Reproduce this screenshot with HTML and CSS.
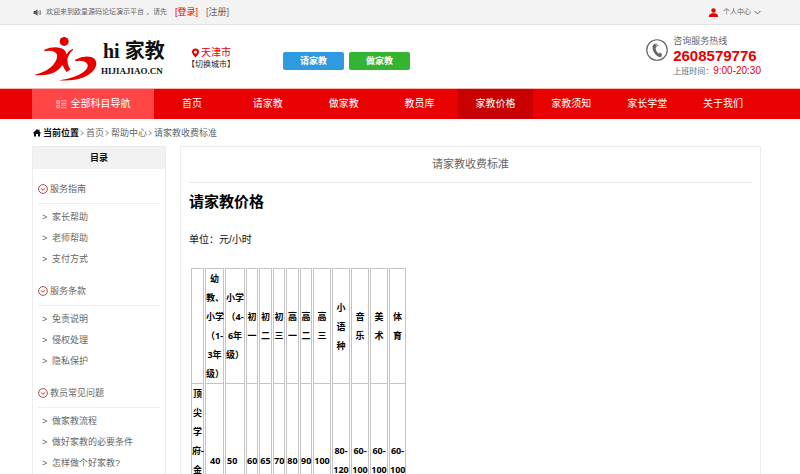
FILE: index.html
```html
<!DOCTYPE html>
<html lang="zh-CN">
<head>
<meta charset="utf-8">
<meta name="viewport" content="width=device-width, initial-scale=1">
<title>请家教收费标准 - hi家教</title>
<link rel="stylesheet" href="styles.css">
</head>
<body>
<div class="topbar">
  <div class="wrap topbar-row">
    <svg class="icon-sound" viewBox="0 0 16 16" aria-hidden="true"><path d="M1 5.500h3l4-3.500v12l-4-3.500H1z" fill="#555"/><path d="M10 5.500q2 2.500 0 5M12 3.500q4 4.500 0 9" fill="none" stroke="#555" stroke-width="1.300"/></svg>
    <span class="welcome">欢迎来到欧皇源码论坛演示平台 ，请先</span>
    <a class="login" href="#">[登录]</a>
    <a class="register" href="#">[注册]</a>
    <a class="account" href="#">
      <svg class="icon-user" viewBox="0 0 18 18" aria-hidden="true"><circle cx="9" cy="5" r="4.500" fill="#e60000"/><path d="M0 18v-3q0-3 6-4.500h6q6 1.500 6 4.500v3z" fill="#e60000"/></svg>
      <span>个人中心</span>
      <svg class="icon-caret" viewBox="0 0 12 8" aria-hidden="true"><path d="M1 1.500l5 5 5-5" fill="none" stroke="#555" stroke-width="1.600"/></svg>
    </a>
  </div>
</div>

<header class="wrap header">
  <a class="logo" href="#">
    <svg class="logo-mark" viewBox="0 0 190 132" aria-hidden="true">
      <g fill="#e60000">
        <circle cx="91" cy="13" r="13.500"/>
        <path d="M31 38Q52 29 72 31Q96 33 97 52Q104 41 117 35L118 38Q104 50 101 66Q100 84 110 98L98 105Q91 96 86 84Q78 97 62 106Q40 117 0 114Q38 106 57 85Q74 64 69 52Q62 37 31 42z"/>
        <path d="M124 68Q150 55 172 60Q192 67 187 87Q180 108 150 121Q118 133 76 130Q124 124 147 107Q168 91 160 80Q150 68 124 73z"/>
      </g>
    </svg>
    <span class="logo-text"><span class="logo-name">hi 家教</span><span class="logo-domain">HIJIAJIAO.CN</span></span>
  </a>
  <div class="city">
    <span class="city-name"><svg class="icon-pin" viewBox="0 0 14 18" aria-hidden="true"><path fill-rule="evenodd" d="M7 0a7 7 0 0 1 7 7q0 4-7 11Q0 11 0 7a7 7 0 0 1 7-7zm0 4a3 3 0 1 0 0 6 3 3 0 0 0 0-6z" fill="#e60000"/></svg>天津市</span>
    <a href="#">【切换城市】</a>
  </div>
  <div class="actions">
    <button class="btn btn-blue" type="button">请家教</button>
    <button class="btn btn-green" type="button">做家教</button>
  </div>
  <div class="hotline">
    <svg class="icon-phone" viewBox="0 0 44 44" aria-hidden="true"><circle cx="22" cy="22" r="20.500" fill="none" stroke="#666" stroke-width="2.400"/><path d="M18 9l4 6-3 3q0 6 6 11l3-1 4 6q-3 4-8 1Q13 28 13 15q1-5 5-6z" fill="#666"/><path d="M20 9l4 5M28 27l4 5" stroke="#666" stroke-width="2"/></svg>
    <div class="hotline-text">
      <span>咨询服务热线</span>
      <strong>2608579776</strong>
      <span class="hours">上班时间：<em>9:00-20:30</em></span>
    </div>
  </div>
</header>

<nav class="nav">
  <div class="wrap nav-row">
    <a class="nav-all" href="#">
      <svg class="icon-list" viewBox="0 0 22 18" aria-hidden="true"><path d="M1.500 1.500h5v5h-5zM1.500 10.500h5v5h-5zM10 1.500h11M10 6.500h11M10 10.500h11M10 15.500h11" fill="none" stroke="#fff" stroke-width="1.300"/></svg>
      全部科目导航
    </a>
    <a href="#">首页</a>
    <a href="#">请家教</a>
    <a href="#">做家教</a>
    <a href="#">教员库</a>
    <a class="active" href="#">家教价格</a>
    <a href="#">家教须知</a>
    <a href="#">家长学堂</a>
    <a href="#">关于我们</a>
  </div>
</nav>

<div class="wrap crumbs">
  <svg class="icon-home" viewBox="0 0 16 16" aria-hidden="true"><path d="M8 0l3 3V1h2v4l3 3-1 1.500-1-1V15H10v-5H6v5H2V8.500l-1 1L0 8z" fill="#111"/></svg>
  <b>当前位置</b>
  <i class="sep"></i><a href="#">首页</a>
  <i class="sep"></i><a href="#">帮助中心</a>
  <i class="sep"></i><span>请家教收费标准</span>
</div>

<div class="wrap page">
  <aside class="sidebar">
    <h2>目录</h2>
    <section>
      <h3><svg class="icon-down" viewBox="0 0 20 20" aria-hidden="true"><circle cx="10" cy="10" r="8.800"/><path d="M5.500 8.500l4.500 4 4.500-4"/></svg>服务指南</h3>
      <ul>
        <li><a href="#">家长帮助</a></li>
        <li><a href="#">老师帮助</a></li>
        <li><a href="#">支付方式</a></li>
      </ul>
    </section>
    <section>
      <h3><svg class="icon-down" viewBox="0 0 20 20" aria-hidden="true"><circle cx="10" cy="10" r="8.800"/><path d="M5.500 8.500l4.500 4 4.500-4"/></svg>服务条款</h3>
      <ul>
        <li><a href="#">免责说明</a></li>
        <li><a href="#">侵权处理</a></li>
        <li><a href="#">隐私保护</a></li>
      </ul>
    </section>
    <section>
      <h3><svg class="icon-down" viewBox="0 0 20 20" aria-hidden="true"><circle cx="10" cy="10" r="8.800"/><path d="M5.500 8.500l4.500 4 4.500-4"/></svg>教员常见问题</h3>
      <ul>
        <li><a href="#">做家教流程</a></li>
        <li><a href="#">做好家教的必要条件</a></li>
        <li><a href="#">怎样做个好家教?</a></li>
      </ul>
    </section>
  </aside>

  <main class="content">
    <h1>请家教收费标准</h1>
    <h2>请家教价格</h2>
    <p>单位：元/小时</p>
    <table class="prices">
      <colgroup><col class="c-label"><col class="c-wide"><col class="c-wider"><col class="c-num"><col class="c-label"><col class="c-num"><col class="c-label"><col class="c-num"><col class="c-mid" span="4"><col class="c-last"></colgroup>
      <thead>
        <tr><th></th><th>幼<br>教、<br>小学<br>（1-<br>3年<br>级）</th><th>小学<br>（4-<br>6年<br>级）</th><th>初<br>一</th><th>初<br>二</th><th>初<br>三</th><th>高<br>一</th><th>高<br>二</th><th>高<br>三</th><th>小<br>语<br>种</th><th>音<br>乐</th><th>美<br>术</th><th>体<br>育</th></tr>
      </thead>
      <tbody>
        <tr><th>顶<br>尖<br>学<br>府-<br>金<br>牌<br>教<br>员</th><td class="start">40</td><td class="start">50</td><td>60</td><td>65</td><td>70</td><td>80</td><td>90</td><td>100</td><td>80-<br>120</td><td>60-<br>100</td><td>60-<br>100</td><td>60-<br>100</td></tr>
      </tbody>
    </table>
  </main>
</div>
</body>
</html>
```

FILE: styles.css
```css
* { box-sizing: border-box; }

body {
  margin: 0;
  background: #fff;
  color: #666;
  font: 9px/20px "Liberation Sans", "Noto Sans CJK SC", sans-serif;
}

a { color: inherit; text-decoration: none; }
h1, h2, h3, p, ul { margin: 0; padding: 0; }
ul { list-style: none; }
svg { display: block; flex: none; }

.wrap { margin: 0 39px 0 32px; }

.topbar { background: #f3f3f3; border-bottom: 1px solid #e2e2e2; }
.topbar-row { display: flex; align-items: center; height: 24px; }
.icon-sound { width: 9px; height: 9px; margin: 0 4px 0 1px; }
.welcome { font-size: 7px; }
.login { margin-left: 8px; color: #e60000; }
.register { margin-left: 8px; }
.account { display: flex; align-items: center; margin-left: auto; font-size: 7px; }
.icon-user { width: 9px; height: 9px; margin-right: 5px; }
.icon-caret { width: 7px; height: 5px; margin-left: 3px; }

.header { display: flex; height: 63px; }
.logo { display: flex; width: 152px; padding: 12px 0 0 2px; color: #111; }
.logo-mark { width: 63px; height: 44px; }
.logo-text {
  display: flex;
  flex-direction: column;
  margin-left: 4px;
  font-family: "Liberation Serif", "Noto Sans CJK SC", serif;
  font-weight: bold;
  white-space: nowrap;
}
.logo-name { padding-left: 2px; font-size: 20px; line-height: 28px; }
.logo-domain { font-size: 9px; line-height: 12px; }

.city { display: flex; flex-direction: column; width: 99px; padding: 22px 0 0 3px; line-height: 12px; color: #222; font-size: 8px; }
.city-name { display: flex; align-items: center; padding-left: 5px; color: #e60000; font-size: 10px; }
.icon-pin { width: 7px; height: 10px; margin-right: 2px; }

.actions { display: flex; align-items: flex-start; gap: 5px; padding-top: 27px; }
.btn {
  width: 61px;
  height: 18px;
  padding: 0;
  border: 0;
  border-radius: 2px;
  color: #fff;
  font: bold 9px/18px "Liberation Sans", "Noto Sans CJK SC", sans-serif;
}
.btn-blue { background: #2e9be0; }
.btn-green { background: #33b533; }

.hotline { display: flex; margin-left: auto; padding-top: 9px; }
.icon-phone { width: 22px; height: 22px; margin: 5px 5px 0 0; }
.hotline-text { display: flex; flex-direction: column; line-height: 14px; }
.hotline strong { color: #e60000; font-size: 15px; line-height: 16px; }
.hours { font-size: 8px; }
.hotline em { color: #e60000; font-size: 10px; font-style: normal; }

.nav { border-top: 1px solid #f5b5b5; background: #e90000; color: #fff; font-size: 10px; line-height: 30px; }
.nav-row { display: flex; }
.nav-row a { flex: 1; text-align: center; }
.nav-row .nav-all {
  display: flex;
  flex: 0 0 122px;
  align-items: center;
  justify-content: center;
  gap: 4px;
  background: #ff4545;
}
.nav-row .active { background: #c90000; }
.icon-list { width: 11px; height: 9px; }

.crumbs { display: flex; align-items: center; height: 27px; }
.icon-home { width: 8px; height: 8px; margin: 0 2px 0 1px; }
.crumbs b { color: #111; }
.sep {
  width: 4px;
  height: 4px;
  margin: 0 3px 0 0;
  border: solid #aaa;
  border-width: 1px 1px 0 0;
  transform: rotate(45deg);
}

.page { display: flex; align-items: flex-start; gap: 14px; }
.sidebar { flex: 0 0 134px; border: 1px solid #ececec; padding-bottom: 8px; }
.sidebar h2 {
  background: #f2f2f2;
  color: #111;
  font-size: 9px;
  line-height: 22px;
  text-align: center;
}
.sidebar section { margin: 6px 5px 7px; }
.sidebar section + section { margin-top: 0; }
.sidebar h3 {
  display: flex;
  align-items: center;
  gap: 2px;
  height: 29px;
  border-bottom: 1px solid #eee;
  font-size: 9px;
  font-weight: normal;
}
.icon-down { width: 10px; height: 10px; fill: none; stroke: #b04a4a; stroke-width: 2; }
.sidebar ul { padding: 3px 0 0 4px; }
.sidebar li { display: flex; line-height: 21px; }
.sidebar li::before { content: ">"; width: 10px; }

.content { flex: 1; min-width: 0; border: 1px solid #ececec; padding: 0 8px 20px; color: #111; }
.content h1 {
  border-bottom: 1px solid #e8e8e8;
  color: #666;
  font-size: 11px;
  font-weight: normal;
  line-height: 35px;
  text-align: center;
}
.content h2 { color: #000; font-size: 15px; line-height: 38px; }
.content p { margin: 9px 0 18px; font-size: 10px; line-height: 20px; }

.prices {
  width: 217px;
  margin-left: 1px;
  table-layout: fixed;
  border-collapse: separate;
  border-spacing: 1px 0;
  color: #000;
  font: bold 9px/19px "Noto Sans", "Noto Sans CJK SC", sans-serif;
  text-align: center;
  white-space: nowrap;
}
.prices th, .prices td { padding: 0; border: 1px solid #c4c4c4; vertical-align: middle; }
.prices tbody th, .prices tbody td { border-top: 0; }
.prices .start { text-align: left; padding-left: 4px; }
.prices td.start + .start { padding-left: 1px; }
.c-label { width: 13px; }
.c-wide { width: 19px; }
.c-wider { width: 20px; }
.c-num { width: 12px; }
.c-mid { width: 18px; }
.c-last { width: 17px; }
```
